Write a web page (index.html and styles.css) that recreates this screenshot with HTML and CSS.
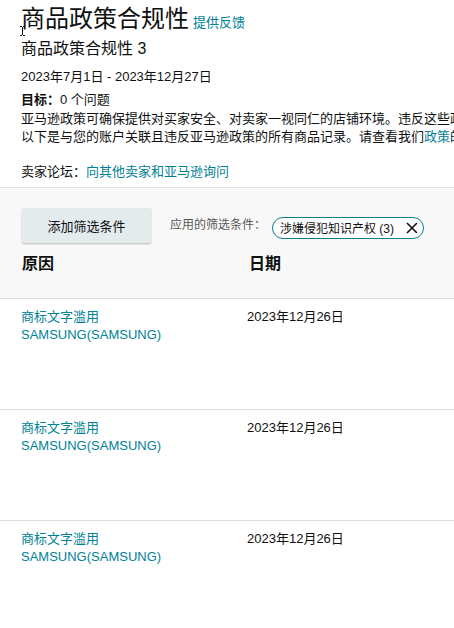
FILE: index.html
```html
<!DOCTYPE html>
<html lang="zh">
<head>
<meta charset="utf-8">
<link rel="stylesheet" href="styles.css">
</head>
<body>
<div class="page">
  <header class="intro">
    <div class="title-row">
      <h1 class="title">商品政策合规性</h1>
      <a class="link feedback" href="#">提供反馈</a>
    </div>
    <div class="subtitle">商品政策合规性 3</div>
    <div class="daterange">2023年7月1日 - 2023年12月27日</div>
    <div class="target"><b>目标：</b>0 个问题</div>
    <p class="desc">亚马逊政策可确保提供对买家安全、对卖家一视同仁的店铺环境。违反这些政策可能会导致您的销售权限被暂停或移除。<br>以下是与您的账户关联且违反亚马逊政策的所有商品记录。请查看我们<a class="link" href="#">政策</a>的详细信息，了解更多内容。</p>
    <div class="forum">卖家论坛：<a class="link" href="#">向其他卖家和亚马逊询问</a></div>
    <svg class="cursor" width="7" height="10" viewBox="0 0 7 10"><path d="M1 0.5h2M4 0.5h2M3.5 1v8M1 9.5h2M4 9.5h2" stroke="#111" stroke-width="1" fill="none"/></svg>
  </header>

  <section class="filters">
    <div class="filter-bar">
      <button class="add-btn">添加筛选条件</button>
      <span class="applied-label">应用的筛选条件：</span>
      <span class="pill">涉嫌侵犯知识产权 (3)
        <svg class="pill-x" width="12" height="12" viewBox="0 0 12 12"><path d="M1 1L11 11M11 1L1 11" stroke="#0f1111" stroke-width="1.6" fill="none"/></svg>
      </span>
    </div>
    <div class="table-head">
      <div class="col-reason">原因</div>
      <div class="col-date">日期</div>
    </div>
  </section>

  <section class="rows">
    <div class="row">
      <div class="col-reason"><a class="link" href="#">商标文字滥用<br>SAMSUNG(SAMSUNG)</a></div>
      <div class="col-date">2023年12月26日</div>
    </div>
    <div class="row">
      <div class="col-reason"><a class="link" href="#">商标文字滥用<br>SAMSUNG(SAMSUNG)</a></div>
      <div class="col-date">2023年12月26日</div>
    </div>
    <div class="row">
      <div class="col-reason"><a class="link" href="#">商标文字滥用<br>SAMSUNG(SAMSUNG)</a></div>
      <div class="col-date">2023年12月26日</div>
    </div>
  </section>
</div>
</body>
</html>
```

FILE: styles.css
```css
html, body {
  margin: 0;
  padding: 0;
  background: #fff;
  overflow: hidden;
}
body {
  font-family: "Liberation Sans", "Noto Sans CJK SC", sans-serif;
  font-size: 13px;
  color: #0f1111;
}
.page {
  width: 454px;
}
.link {
  color: #008296;
  text-decoration: none;
}
.intro {
  position: relative;
  padding: 0 0 5px 21px;
}
.title-row {
  display: flex;
  align-items: baseline;
  gap: 4px;
  height: 38px;
}
.title {
  margin: 0;
  font-size: 24px;
  font-weight: normal;
  line-height: 38px;
}
.feedback {
  font-size: 13px;
}
.subtitle {
  font-size: 16px;
  line-height: 22px;
}
.daterange {
  margin-top: 7px;
  line-height: 20px;
}
.target {
  margin-top: 3px;
  line-height: 20px;
}
.target b {
  font-weight: bold;
}
.desc {
  margin: 0;
  line-height: 18px;
  white-space: nowrap;
}
.forum {
  margin-top: 16px;
  line-height: 20px;
}
.cursor {
  position: absolute;
  left: 19px;
  top: 26px;
}
.filters {
  background: #f8f8f8;
  border-top: 1px solid #dddddd;
  padding: 20px 0 0 22px;
  height: 90px;
}
.filter-bar {
  display: flex;
  align-items: center;
}
.add-btn {
  width: 129px;
  height: 35px;
  border: none;
  border-radius: 2px;
  background: #e3ebed;
  box-shadow: 0 1px 2px rgba(0,0,0,0.25);
  font-family: inherit;
  font-size: 13px;
  color: #0f1111;
  padding: 0;
}
.applied-label {
  margin-left: 19px;
  font-size: 12px;
  color: #565959;
  margin-top: -4px;
}
.pill {
  margin-left: 6px;
  margin-top: 4px;
  display: inline-flex;
  align-items: center;
  height: 20px;
  padding: 0 5px 0 7px;
  border: 1.5px solid #0a7e8c;
  border-radius: 12px;
  background: #fff;
  font-size: 12px;
  white-space: nowrap;
}
.pill-x {
  margin-left: 12px;
}
.table-head {
  display: flex;
  margin-top: 10px;
  font-size: 16px;
  font-weight: bold;
  line-height: 22px;
}
.table-head .col-reason {
  width: 227px;
}
.rows .row {
  display: flex;
  border-top: 1px solid #dddddd;
  padding: 9px 0 0 21px;
  box-sizing: border-box;
  height: 111px;
  line-height: 18px;
}
.rows .col-reason {
  width: 226px;
}
```
